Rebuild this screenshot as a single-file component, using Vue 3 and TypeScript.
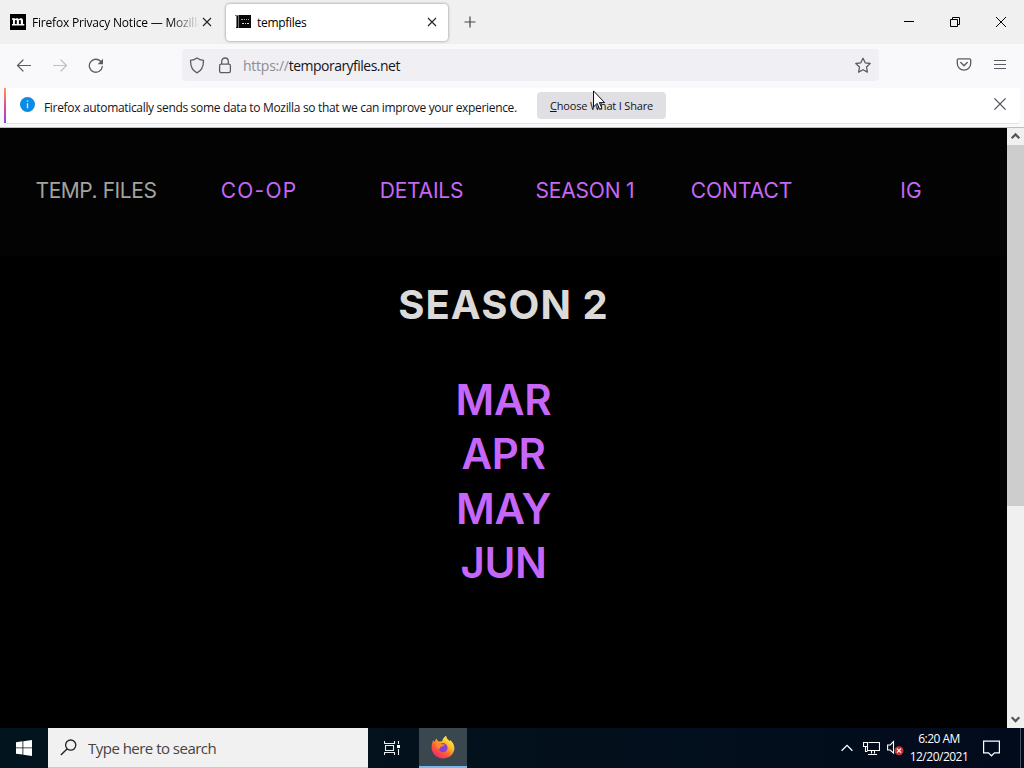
<script setup lang="ts">
interface NavItem {
  label: string
  kind: string
}

const navItems: NavItem[] = [
  { label: 'TEMP. FILES', kind: 'brand' },
  { label: 'CO-OP', kind: 'coop' },
  { label: 'DETAILS', kind: 'details' },
  { label: 'SEASON 1', kind: 'season' },
  { label: 'CONTACT', kind: 'contact' },
  { label: 'IG', kind: 'ig' },
]

const months: string[] = ['MAR', 'APR', 'MAY', 'JUN']
</script>

<template>
  <div class="desktop">
    <header class="tabbar">
      <div class="tab">
        <svg class="favicon" width="16" height="16" viewBox="0 0 16 16">
          <rect width="16" height="16" fill="#000" />
          <path d="M2 4.2h3v1.100C5.700 4.300 8 3.600 8.800 5.400 9.800 3.700 13 3.700 13 6.300V10h1.300v1.600H10V10h.8V6.900c0-1.500-1.900-1.200-1.900.1v3h1v1.600H6.100V10h.7V6.900c0-1.500-1.900-1.200-1.900.1v3H6v1.600H2V10h1V5.800H2z" fill="#fff" />
        </svg>
        <span class="tab-title tab-title-fade">Firefox Privacy Notice — Mozilla</span>
        <svg class="tab-close" width="10" height="10" viewBox="0 0 10 10"><path d="M1 1l8 8M9 1l-8 8" stroke="#222" stroke-width="1.100" fill="none" /></svg>
      </div>
      <div class="tab tab-active">
        <svg class="favicon" width="16" height="16" viewBox="0 0 16 16">
          <rect x="1" y="1" width="15" height="13" fill="#080808" />
          <path d="M0 1h4v1H0zM1 2h1v11H1zM3 2h1v12H3z" fill="#777" />
          <path d="M6 5.500h2M9 5.500h1M11 5.500h1M13 5.500h1" stroke="#aaa" />
          <path d="M7 9.500h2M10 9.500h1M12 9.500h2" stroke="#ddd" />
        </svg>
        <span class="tab-title tab-title-active">tempfiles</span>
        <svg class="tab-close" width="10" height="10" viewBox="0 0 10 10"><path d="M1 1l8 8M9 1l-8 8" stroke="#222" stroke-width="1.100" fill="none" /></svg>
      </div>
      <svg class="new-tab" width="12" height="12" viewBox="0 0 12 12"><path d="M6 .5v11M.5 6h11" stroke="#444" stroke-width="1.200" /></svg>
      <div class="window-controls">
        <svg width="10" height="10" viewBox="0 0 10 10"><path d="M0 4.500h10" stroke="#000" /></svg>
        <svg width="10" height="10" viewBox="0 0 10 10"><path d="M.5 2.500h7v7h-7zM2.500 2.500v-2h7v7h-2" stroke="#000" fill="none" /></svg>
        <svg width="10" height="10" viewBox="0 0 10 10"><path d="M0 0l10 10M10 0L0 10" stroke="#000" fill="none" /></svg>
      </div>
    </header>

    <div class="toolbar">
      <div class="nav-buttons">
        <svg width="16" height="16" viewBox="0 0 16 16"><path d="M14.500 7.500h-13M7 2L1.500 7.500 7 13" fill="none" stroke="#5b5b66" stroke-width="1.200" stroke-linecap="round" stroke-linejoin="round" /></svg>
        <svg width="16" height="16" viewBox="0 0 16 16"><path d="M1.500 7.500h13M9 2l5.500 5.500L9 13" fill="none" stroke="#bfbfc6" stroke-width="1.200" stroke-linecap="round" stroke-linejoin="round" /></svg>
        <svg width="16" height="16" viewBox="0 0 16 16"><path d="M14.300 8.500A6.500 6.500 0 1 1 12.600 3.300" fill="none" stroke="#5b5b66" stroke-width="1.300" stroke-linecap="round" /><path d="M15 .8v5.400H9.600z" fill="#5b5b66" /></svg>
      </div>
      <div class="urlbar">
        <svg class="shield" width="16" height="18" viewBox="0 0 16 18"><path d="M8 .9c2 1.500 4.200 2.200 6.500 2.500 0 5.500-1.500 10-6.500 12.400C3 13.400 1.500 8.900 1.500 3.400 3.800 3.100 6 2.400 8 .9z" fill="none" stroke="#5b5b66" stroke-width="1.300" stroke-linejoin="round" /></svg>
        <svg class="lock" width="14" height="18" viewBox="0 0 14 18"><rect x="1.600" y="7.200" width="10.800" height="8.500" rx="1.600" fill="none" stroke="#5b5b66" stroke-width="1.300" /><path d="M3.700 7V4.300a3.300 3.300 0 0 1 6.600 0V7" fill="none" stroke="#5b5b66" stroke-width="1.300" /></svg>
        <span class="url"><span class="scheme">https://</span>temporaryfiles.net</span>
        <svg class="star" width="18" height="18" viewBox="0 0 18 18"><path d="M9 1.300l2.200 4.500 5 .7-3.700 3.500.9 5.100L9 12.700l-4.400 2.400.9-5.100L1.800 6.500l5-.7z" fill="none" stroke="#5b5b66" stroke-width="1.300" stroke-linejoin="round" /></svg>
      </div>
      <svg class="pocket" width="16" height="14" viewBox="0 0 16 14"><path d="M2.600.8h10.800c.8 0 1.300.5 1.300 1.300v3.400a6.700 6.700 0 0 1-13.400 0V2.100c0-.8.5-1.300 1.300-1.300z" fill="none" stroke="#5b5b66" stroke-width="1.300" /><path d="M4.800 4.600L8 7.700l3.200-3.100" fill="none" stroke="#5b5b66" stroke-width="1.400" stroke-linecap="round" stroke-linejoin="round" /></svg>
      <svg class="menu" width="12" height="11" viewBox="0 0 12 11"><path d="M0 1.500h12M0 5.500h12M0 9.500h12" stroke="#5b5b66" stroke-width="1.200" /></svg>
    </div>

    <div class="notice-area">
      <div class="notice">
        <div class="notice-accent"></div>
        <svg class="info" width="15" height="15" viewBox="0 0 15 15"><circle cx="7.500" cy="7.500" r="7.500" fill="#0b8ce4" /><path d="M7.500 6.300v5M7.500 3.200v1.500" stroke="#cfeaff" stroke-width="1.300" /></svg>
        <span class="notice-text">Firefox automatically sends some data to Mozilla so that we can improve your experience.</span>
        <button class="share"><span class="share-label"><u>C</u>hoose What I Share</span></button>
        <svg class="notice-close" width="12" height="12" viewBox="0 0 12 12"><path d="M.4.4l11.200 11.200M11.600.4L.4 11.600" stroke="#4a4a55" stroke-width="1.200" /></svg>
      </div>
    </div>

    <div class="viewport">
      <main class="page">
        <nav class="site-nav">
          <a v-for="item in navItems" :key="item.label" :class="['nav-link', item.kind]">{{ item.label }}</a>
        </nav>
        <h1 class="season-title">SEASON 2</h1>
        <ul class="months">
          <li v-for="month in months" :key="month" :class="['month', month.toLowerCase()]">{{ month }}</li>
        </ul>
      </main>
      <aside class="scrollbar">
        <svg class="scroll-arrow" width="17" height="17" viewBox="0 0 17 17"><path d="M4.700 10.200L8.500 6.400l3.800 3.800" fill="none" stroke="#555" stroke-width="2.200" /></svg>
        <div class="thumb"></div>
        <svg class="scroll-arrow" width="17" height="17" viewBox="0 0 17 17"><path d="M4.700 6.300l3.800 3.800 3.800-3.800" fill="none" stroke="#555" stroke-width="2.200" /></svg>
      </aside>
    </div>

    <footer class="taskbar">
      <div class="start">
        <svg width="16" height="16" viewBox="0 0 16 16"><path d="M0 2.200l6.500-.9v6.200H0zM7.300 1.200L16 0v7.500H7.300zM0 8.300h6.500v6.300L0 13.700zM7.300 8.300H16V16l-8.700-1.300z" fill="#fff" /></svg>
      </div>
      <div class="search">
        <svg width="17" height="17" viewBox="0 0 17 17"><circle cx="10.700" cy="6.100" r="5.100" fill="none" stroke="#222" stroke-width="1.300" /><path d="M7 9.900L.9 16" stroke="#222" stroke-width="1.400" /></svg>
        <span class="search-text">Type here to search</span>
      </div>
      <div class="task-view">
        <svg width="17" height="16" viewBox="0 0 17 16"><path d="M.5 1v2.500h10V1M.5 15v-2.500h10V15M1.500 5.500h8v5h-8zM14.500 1v3M14.500 9v6" fill="none" stroke="#e8eef0" stroke-width="1.100" /><path d="M13 5h3v3h-3z" fill="#fff" /></svg>
      </div>
      <div class="firefox-task">
        <svg width="24" height="24" viewBox="0 0 24 24">
          <defs>
            <linearGradient id="flame" x1=".82" y1=".08" x2=".2" y2=".95">
              <stop offset="0" stop-color="#fff14a" /><stop offset=".35" stop-color="#ffb52a" /><stop offset=".62" stop-color="#ff6531" /><stop offset="1" stop-color="#ed256f" />
            </linearGradient>
            <radialGradient id="globe"><stop offset="0" stop-color="#6a4be0" /><stop offset="1" stop-color="#9b3bc6" /></radialGradient>
          </defs>
          <path d="M2.300 5.300l1.500 1.600L5.200 3.500l2.200 3 3.700-.2C11.700 3.500 13 1.700 15.200.7c.1 2.500 1.700 3.600 3.300 5.200l1-.6c1.800 1.600 3.900 4.500 3.900 7.800C23.400 19 18.400 23.500 12 23.500S.6 18.700.6 12.600c0-2.800.6-5.200 1.700-7.300z" fill="url(#flame)" />
          <circle cx="12" cy="12.700" r="4.600" fill="url(#globe)" />
          <path d="M4.700 8.500c2.200-1 4.800-.5 6.300.7l2.900.2c0 1.300-2.600 1.400-3.300 2.300-1.300.2-2.300 1.500-2.200 2.900-1.700-1.300-3.900-3.300-3.700-6.100z" fill="#ff8a28" />
        </svg>
      </div>
      <div class="tray">
        <svg class="chevron" width="12" height="8" viewBox="0 0 12 8"><path d="M.6 6.800L6 1.400l5.400 5.400" fill="none" stroke="#fff" stroke-width="1.300" /></svg>
        <svg class="network" width="17" height="15" viewBox="0 0 17 15"><path d="M5.500 1.500h11v8h-12V6M8.500 9.500v3M11.500 9.500v3M5 13.500h9M.5 1.500h4v4h-4zM2.500 5.500v5h2" fill="none" stroke="#fff" stroke-width="1.100" /></svg>
        <svg class="volume" width="17" height="16" viewBox="0 0 17 16"><path d="M.6 5h2.600L6.500 1.600v11.500L3.200 10H.6z" fill="none" stroke="#fff" stroke-width="1.100" /><circle cx="12" cy="10.700" r="4.500" fill="#c93333" /><path d="M10 8.700l4 4M14 8.700l-4 4" stroke="#fff" stroke-width="1.200" /></svg>
        <div class="clock"><span class="time">6:20 AM</span><span class="date">12/20/2021</span></div>
        <svg class="action" width="17" height="17" viewBox="0 0 17 17"><path d="M.6 1.100h15.800v11.800h-4.900l-3 2.900-3-2.900H.6z" fill="none" stroke="#fff" stroke-width="1.200" /></svg>
        <div class="show-desktop"></div>
      </div>
    </footer>

    <svg class="cursor" width="14" height="21" viewBox="0 0 14 21"><path d="M.5.900v16l3.700-3.500 2.400 5.900 2.300-1-2.500-5.700h5.200z" fill="#fff" stroke="#111" /></svg>
  </div>
</template>

<style>
html,
body {
  margin: 0;
  overflow: hidden;
}
</style>

<style scoped>
.desktop {
  position: relative;
  width: 1024px;
  height: 768px;
  display: flex;
  flex-direction: column;
  overflow: hidden;
  font-family: 'Open Sans', 'Noto Sans', sans-serif;
  font-size: 12px;
  color: #15141a;
  white-space: nowrap;
}
.desktop svg {
  flex: none;
}
.tabbar {
  height: 44px;
  flex: none;
  display: flex;
  align-items: center;
  background: #f0f0f0;
}
.tab {
  box-sizing: border-box;
  width: 226px;
  height: 36px;
  padding: 0 14px 0 10px;
  display: flex;
  align-items: center;
}
.tab-active {
  width: 222px;
  height: 37px;
  padding: 0 11px 0 9px;
  background: #fff;
  border-radius: 4px;
  box-shadow: 0 0 3px rgba(0, 0, 0, 0.45);
}
.tab-title {
  flex: 1;
  overflow: hidden;
  margin-left: 6px;
  padding-top: 2px;
  line-height: 18px;
  letter-spacing: -0.2px;
  color: #000;
}
.tab-title-fade {
  mask-image: linear-gradient(to right, #000 138px, transparent 168px);
}
.tab-title-active {
  letter-spacing: -0.3px;
}
.new-tab {
  margin-left: 16px;
}
.window-controls {
  margin-left: auto;
  margin-right: 18px;
  display: flex;
  gap: 36px;
}
.toolbar {
  height: 44px;
  flex: none;
  display: flex;
  align-items: center;
  background: #f9f9fb;
}
.nav-buttons {
  display: flex;
  gap: 20px;
  width: 166px;
  padding-left: 16px;
}
.urlbar {
  box-sizing: border-box;
  width: 697px;
  height: 32px;
  margin-bottom: 2px;
  padding: 0 7px;
  display: flex;
  align-items: center;
  background: #f0f0f4;
  border-radius: 4px;
}
.shield,
.lock,
.star {
  margin-top: 1px;
}
.lock {
  margin-left: 13px;
}
.url {
  margin-left: 11px;
  padding-top: 1px;
  font-size: 14px;
  letter-spacing: -0.52px;
}
.scheme {
  color: #8d8d94;
  letter-spacing: -0.25px;
}
.star {
  margin-left: auto;
}
.pocket {
  margin: 0 0 2px 77px;
}
.menu {
  margin: 0 0 4px 22px;
}
.notice-area {
  box-sizing: border-box;
  height: 40px;
  flex: none;
  padding: 0 4px;
  background: #f9f9fb;
  border-bottom: 1px solid #bdbdc1;
}
.notice {
  height: 35px;
  display: flex;
  align-items: center;
  background: #fff;
  border-radius: 4px;
  border-bottom: 1px solid #e2e2e5;
}
.notice-accent {
  width: 2px;
  height: 35px;
  background: linear-gradient(#ff9a50, #d84e9e 50%, #8a45e6);
}
.info {
  margin: 0 0 3px 14px;
}
.notice-text {
  width: 484px;
  margin-left: 9px;
  padding-top: 3px;
  letter-spacing: -0.325px;
}
.share {
  width: 129px;
  height: 27px;
  margin-left: 9px;
  padding: 0;
  border: 0;
  border-radius: 4px;
  background: #e0e0e4;
  color: #15141a;
  font: 500 11px 'Open Sans', 'Noto Sans', sans-serif;
}
.share-label {
  letter-spacing: -0.18px;
}
.notice-close {
  margin: 0 14px 3px auto;
}
.viewport {
  height: 600px;
  flex: none;
  display: flex;
  background: #000;
}
.page {
  width: 1007px;
  font-family: Inter, sans-serif;
}
.site-nav {
  box-sizing: border-box;
  height: 128px;
  padding: 0 0 2px 15px;
  display: grid;
  grid-template-columns: 162px 164px 161px 166px 147px 192px;
  align-items: center;
  justify-items: center;
  background: #030303;
}
.nav-link {
  font-size: 21px;
  line-height: 28px;
  color: #c767f5;
}
.brand {
  color: #a3a3a0;
  letter-spacing: -0.45px;
}
.coop {
  letter-spacing: 1.2px;
}
.details,
.season {
  letter-spacing: -0.2px;
}
.season-title {
  margin: 28px 0 0;
  font-size: 40px;
  line-height: 42px;
  font-weight: 650;
  letter-spacing: 1.1px;
  text-align: center;
  color: #dcdad8;
}
.months {
  list-style: none;
  margin: 47px 0 0;
  padding: 0;
  text-align: center;
}
.month {
  font-size: 42px;
  line-height: 54.4px;
  font-weight: 620;
  letter-spacing: -0.3px;
  color: #c666fb;
}
.scrollbar {
  width: 17px;
  height: 600px;
  display: flex;
  flex-direction: column;
  background: #f0f0f0;
}
.thumb {
  height: 361px;
  margin-bottom: auto;
  background: #cdcdcd;
}
.taskbar {
  height: 40px;
  flex: none;
  display: flex;
  background: linear-gradient(to right, #02141e, #03101c 60%, #020b1c);
  color: #fff;
}
.start {
  width: 48px;
  display: flex;
  align-items: center;
  justify-content: center;
}
.search {
  box-sizing: border-box;
  width: 320px;
  padding-left: 12px;
  display: flex;
  align-items: center;
  background: #f1f1f1;
  border: solid #c9c9c9;
  border-width: 0 0 1px;
  color: #444;
}
.search-text {
  margin-left: 11px;
  padding-top: 1px;
  font-size: 15px;
  letter-spacing: -0.52px;
}
.task-view {
  box-sizing: border-box;
  width: 51px;
  padding-right: 2px;
  display: flex;
  align-items: center;
  justify-content: center;
}
.firefox-task {
  box-sizing: border-box;
  width: 48px;
  display: flex;
  align-items: center;
  justify-content: center;
  background: #3b474f;
  border-bottom: 2px solid #76b9ed;
}
.tray {
  margin-left: auto;
  display: flex;
  align-items: center;
}
.network {
  margin-left: 10px;
}
.volume {
  margin-left: 7px;
}
.clock {
  width: 60px;
  margin-left: 5px;
  display: flex;
  flex-direction: column;
  align-items: center;
  line-height: 18px;
}
.time,
.date {
  letter-spacing: -0.5px;
}
.action {
  margin-left: 14px;
}
.show-desktop {
  width: 3px;
  height: 40px;
  margin-left: 20px;
  border-left: 1px solid #4b5663;
}
.cursor {
  position: absolute;
  left: 593px;
  top: 90px;
}
</style>
